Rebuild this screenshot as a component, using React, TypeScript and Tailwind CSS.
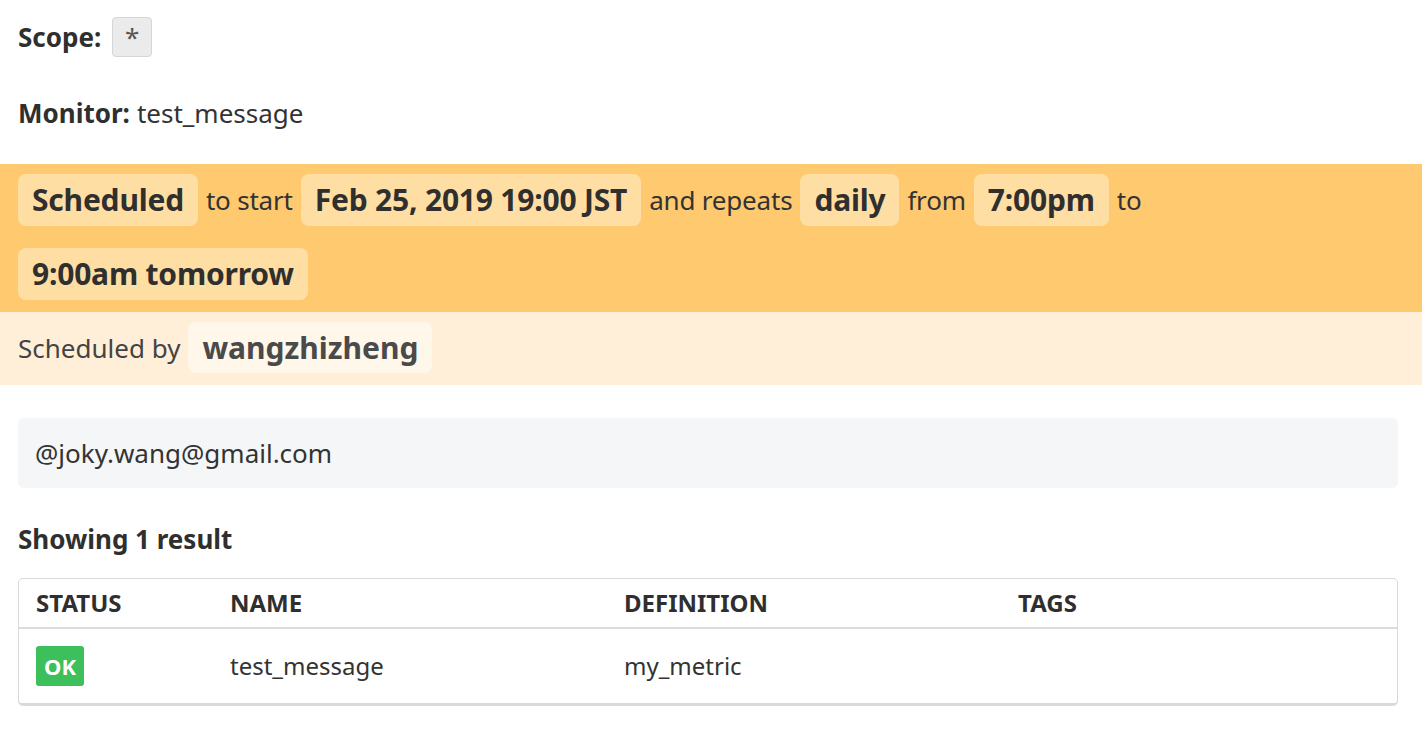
import React from 'react';

const font = { fontFamily: '"Noto Sans", "Open Sans", sans-serif' };

const Pill: React.FC<{ children: React.ReactNode; light?: boolean }> = ({ children, light }) => (
  <span
    className={
      light
        ? "inline-flex items-center h-[51px] px-[14px] rounded-lg bg-[#fff7ea] text-[#4a4a4a] text-[30px] font-bold"
        : "inline-flex items-center h-[52px] px-[14px] rounded-lg bg-[#ffdea3] text-[#2f2f2f] text-[30px] font-bold tracking-[-0.2px]"
    }
  >
    {children}
  </span>
);

const Word: React.FC<{ children: React.ReactNode }> = ({ children }) => (
  <span className="mx-[8px] text-[26px] text-[#333] tracking-[-0.2px]">{children}</span>
);

export default function App() {
  return (
    <div className="w-[1422px] min-h-[738px] bg-white text-[#333]" style={font}>
      <div className="px-[18px] pt-[17px]">
        <div className="flex items-center gap-[11px] h-[40px]">
          <span className="text-[26px] font-bold text-[#2f2f2f]">Scope:</span>
          <span className="inline-flex items-center justify-center w-[40px] h-[40px] rounded-[4px] bg-[#ebebeb] border border-[#d6d6d6] text-[26px] text-[#555]">
            *
          </span>
        </div>
        <div className="mt-[38px] h-[36px] flex items-center text-[26px] text-[#333]">
          <span className="font-bold mr-[7px] text-[#2f2f2f]">Monitor:</span> test_message
        </div>
      </div>

      <div className="mt-[33px] bg-[#fec96f] px-[18px] pt-[10px] pb-[12px]">
        <div className="flex flex-wrap items-center gap-y-[22px] leading-none">
          <Pill>Scheduled</Pill>
          <Word>to start</Word>
          <Pill>Feb 25, 2019 19:00 JST</Pill>
          <Word>and repeats</Word>
          <Pill>daily</Pill>
          <Word>from</Word>
          <Pill>7:00pm</Pill>
          <Word>to</Word>
          <Pill>9:00am tomorrow</Pill>
        </div>
      </div>

      <div className="bg-[#ffefd9] px-[18px] pt-[10px] pb-[12px] flex items-center leading-none">
        <span className="text-[26px] text-[#444] mr-[8px]">Scheduled by</span>
        <Pill light>wangzhizheng</Pill>
      </div>

      <div className="pl-[18px] pr-[24px] pt-[33px]">
        <div className="h-[70px] rounded-[6px] bg-[#f5f6f8] flex items-center px-[17px] text-[26px] text-[#333]">
          @joky.wang@gmail.com
        </div>

        <div className="mt-[35px] h-[32px] flex items-center text-[26px] font-bold text-[#2f2f2f]">
          Showing 1 result
        </div>

        <div className="mt-[23px] rounded-[5px] border border-[#d9d9de] border-b-[3px]">
          <div className="grid grid-cols-[194px_394px_394px_1fr] h-[50px] items-center px-[17px] border-b-2 border-[#dcdce0] text-[24px] font-bold text-[#2f2f2f]">
            <span>STATUS</span>
            <span>NAME</span>
            <span>DEFINITION</span>
            <span>TAGS</span>
          </div>
          <div className="grid grid-cols-[194px_394px_394px_1fr] h-[74px] items-center px-[17px] text-[24px] text-[#333]">
            <span>
              <span className="inline-flex items-center justify-center w-[48px] h-[40px] rounded-[3px] bg-[#3dbf5b] text-white text-[22px] font-bold">
                OK
              </span>
            </span>
            <span>test_message</span>
            <span>my_metric</span>
            <span></span>
          </div>
        </div>
      </div>
    </div>
  );
}
